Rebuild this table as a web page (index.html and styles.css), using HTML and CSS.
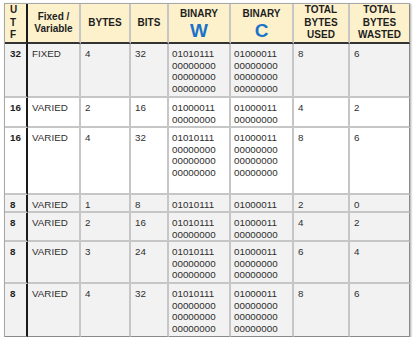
FILE: index.html
```html
<!DOCTYPE html>
<html lang="en">
<head>
  <meta charset="UTF-8" />
  <title>UTF encodings</title>
  <link rel="stylesheet" href="styles.css">
</head>
<body>
  <table class="utf-table">
    <colgroup>
      <col class="c-utf">
      <col class="c-fixed">
      <col class="c-bytes">
      <col class="c-bits">
      <col class="c-bin">
      <col class="c-bin2">
      <col class="c-used">
      <col class="c-wasted">
    </colgroup>
    <thead>
      <tr>
        <th class="utf">U<br>T<br>F</th>
        <th>Fixed /<br>Variable</th>
        <th>BYTES</th>
        <th>BITS</th>
        <th class="bin-head">BINARY<span class="letter">W</span></th>
        <th class="bin-head">BINARY<span class="letter">C</span></th>
        <th>TOTAL<br>BYTES<br>USED</th>
        <th>TOTAL<br>BYTES<br>WASTED</th>
      </tr>
    </thead>
    <tbody>
      <tr class="shade h54">
        <td class="utf">32</td><td>FIXED</td><td>4</td><td>32</td>
        <td class="bin">01010111<br>00000000<br>00000000<br>00000000</td>
        <td class="bin">01000011<br>00000000<br>00000000<br>00000000</td>
        <td>8</td><td>6</td>
      </tr>
      <tr class="h30">
        <td class="utf">16</td><td>VARIED</td><td>2</td><td>16</td>
        <td class="bin">01000011<br>00000000</td>
        <td class="bin">01000011<br>00000000</td>
        <td>4</td><td>2</td>
      </tr>
      <tr class="h67">
        <td class="utf">16</td><td>VARIED</td><td>4</td><td>32</td>
        <td class="bin">01010111<br>00000000<br>00000000<br>00000000</td>
        <td class="bin">01000011<br>00000000<br>00000000<br>00000000</td>
        <td>8</td><td>6</td>
      </tr>
      <tr class="shade h18">
        <td class="utf">8</td><td>VARIED</td><td>1</td><td>8</td>
        <td class="bin">01010111</td>
        <td class="bin">01000011</td>
        <td>2</td><td>0</td>
      </tr>
      <tr class="shade h26">
        <td class="utf">8</td><td>VARIED</td><td>2</td><td>16</td>
        <td class="bin">01010111<br>00000000</td>
        <td class="bin">01000011<br>00000000</td>
        <td>4</td><td>2</td>
      </tr>
      <tr class="shade h42">
        <td class="utf">8</td><td>VARIED</td><td>3</td><td>24</td>
        <td class="bin">01010111<br>00000000<br>00000000</td>
        <td class="bin">01000011<br>00000000<br>00000000</td>
        <td>6</td><td>4</td>
      </tr>
      <tr class="shade h54">
        <td class="utf">8</td><td>VARIED</td><td>4</td><td>32</td>
        <td class="bin">01010111<br>00000000<br>00000000<br>00000000</td>
        <td class="bin">01000011<br>00000000<br>00000000<br>00000000</td>
        <td>8</td><td>6</td>
      </tr>
    </tbody>
  </table>
</body>
</html>
```

FILE: styles.css
```css
body {
  margin: 0;
  padding: 3px 0 0 4px;
  background: #fff;
  font-family: "Liberation Sans", Arial, sans-serif;
}
.utf-table {
  width: 405px;
  table-layout: fixed;
  border-collapse: separate;
  border-spacing: 0;
  border-top: 1px solid #a8a8a8;
  border-left: 1px solid #a8a8a8;
  box-shadow: 1px 1px 2px rgba(0, 0, 0, 0.35);
}
.c-utf { width: 23px; }
.c-fixed { width: 53px; }
.c-bytes { width: 50px; }
.c-bits { width: 38px; }
.c-bin { width: 62px; }
.c-bin2 { width: 63px; }
.c-used { width: 56px; }
.c-wasted { width: 60px; }

th, td {
  box-sizing: border-box;
  border-right: 2px solid #c6c6c6;
  border-bottom: 2px solid #c6c6c6;
  vertical-align: top;
  text-align: left;
  font-size: 9.8px;
  line-height: 11.6px;
  color: #2e2e2e;
  padding: 4px 2px 0 4px;
  overflow: hidden;
}
th {
  height: 40px;
  background: #fdf1cc;
  color: #1e1e1e;
  font-weight: bold;
  font-size: 10px;
  line-height: 12.4px;
  text-align: center;
  vertical-align: middle;
  padding: 0 1px;
  border-bottom: 2px solid #333;
}
th.utf {
  text-align: left;
  padding-left: 5px;
}
th.bin-head {
  vertical-align: top;
  padding-top: 4px;
}
.letter {
  display: block;
  color: #1b73c9;
  font-size: 19px;
  line-height: 21px;
}
th:first-child,
td:first-child {
  border-right: 2px solid #1a1a1a;
}
th:last-child,
td:last-child {
  border-right: 1px solid #8a8a8a;
}
tbody tr:last-child td {
  border-bottom: 1px solid #8a8a8a;
}
td.utf {
  font-weight: bold;
  color: #1e1e1e;
  padding-left: 5px;
}
td.bin {
  padding-left: 3px;
}
tr.shade td { background: #f2f2f2; }
tr.h54 td { height: 54px; }
tr.h30 td { height: 30px; }
tr.h67 td { height: 67px; }
tr.h18 td { height: 18px; }
tr.h26 td { height: 26px; }
tr.h42 td { height: 42px; }
tbody tr:last-child td { height: 53px; }
```
